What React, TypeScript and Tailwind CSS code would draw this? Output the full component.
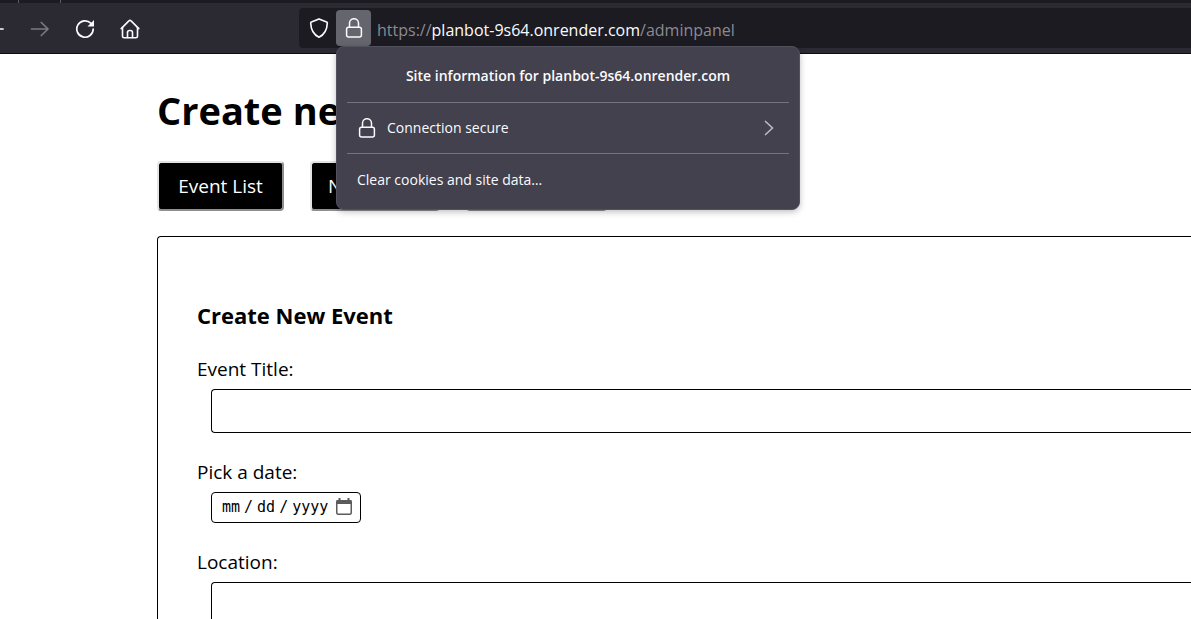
import React from "react";

const pageFont = "font-['Open_Sans','Noto_Sans',sans-serif]";

function Arrow({ flip }: { flip?: boolean }) {
  return (
    <svg viewBox="0 0 20 20" className="h-5 w-5" fill="none" stroke="currentColor" strokeWidth="1.7" strokeLinecap="round" strokeLinejoin="round" aria-hidden="true">
      {flip ? <path d="M18 10H2M9 3L2 10l7 7" /> : <path d="M1.500 10h16.500M11.300 3.500L18 10l-6.700 6.500" />}
    </svg>
  );
}

function ReloadIcon() {
  return (
    <svg viewBox="0 0 20 20" className="h-5 w-5" fill="none" stroke="currentColor" strokeWidth="1.7" strokeLinecap="round" aria-hidden="true">
      <path d="M15.800 4.200A8.200 8.200 0 1 0 18.200 10" />
      <path d="M19 1v6.500h-6.500z" fill="currentColor" stroke="none" />
    </svg>
  );
}

function HomeIcon() {
  return (
    <svg viewBox="0 0 20 20" className="h-5 w-5" fill="none" stroke="currentColor" strokeWidth="1.6" strokeLinecap="round" strokeLinejoin="round" aria-hidden="true">
      <path d="M1.200 9.600l7.700-7.700a1.500 1.500 0 0 1 2.200 0l7.700 7.700" />
      <path d="M2.500 8.500v8.700a1.600 1.600 0 0 0 1.600 1.600h11.800a1.600 1.600 0 0 0 1.600-1.600V8.500" />
      <path d="M7.500 18.500v-5a2 2 0 0 1 2-2h1a2 2 0 0 1 2 2v5" />
    </svg>
  );
}

function ShieldIcon() {
  return (
    <svg viewBox="0 0 20 20" className="h-5 w-5" fill="none" stroke="currentColor" strokeWidth="1.6" strokeLinejoin="round" aria-hidden="true">
      <path d="M10 .9l7.600 3.200a1 1 0 0 1 .7 1C18.100 11 16 16.300 10 19.200 4 16.300 1.900 11 1.700 5.100a1 1 0 0 1 .7-1z" />
    </svg>
  );
}

function LockIcon() {
  return (
    <svg viewBox="0 0 20 20" className="h-5 w-5" fill="none" stroke="currentColor" strokeWidth="1.5" aria-hidden="true">
      <rect x="2.600" y="9.200" width="14.800" height="9.800" rx="2" />
      <path d="M5.500 9V5.200a4.500 4.500 0 0 1 9 0V9" />
    </svg>
  );
}

function CalendarIcon() {
  return (
    <svg viewBox="0 0 16 17" className="h-[17px] w-4" fill="none" aria-hidden="true">
      <rect x=".75" y="2.750" width="14.500" height="13.500" rx="1.500" stroke="#5b5b5b" strokeWidth="1.500" />
      <path d="M.5 2h15v4H.5zM2.500 0h2v3h-2zM11.500 0h2v3h-2z" fill="#5b5b5b" />
    </svg>
  );
}

function SitePanel() {
  return (
    <section
      aria-label="Site information"
      className="absolute left-0 top-full z-10 flex h-[164px] w-[464px] flex-col rounded-lg border border-[#52525e] bg-[#42414d] px-2.5 text-sm text-[#fbfbfe] shadow-[0_2px_6px_rgba(0,0,0,0.25)]"
    >
      <h2 className="flex h-[55px] items-center justify-center pt-0.5 font-semibold">
        Site information for planbot-9s64.onrender.com
      </h2>
      <button type="button" className="flex h-[52px] items-center gap-2.5 border-y border-[#74737e] px-2.5">
        <LockIcon />
        <span>Connection secure</span>
        <svg viewBox="0 0 10 16" className="ml-auto mr-[5px] h-4 w-2.5" fill="none" stroke="#bfbfc9" strokeWidth="1.500" aria-hidden="true">
          <path d="M1 1l7.500 7L1 15" />
        </svg>
      </button>
      <button type="button" className="flex h-[52px] items-center px-2.5 text-left">
        Clear cookies and site data…
      </button>
    </section>
  );
}

function BrowserBar() {
  return (
    <header className="shrink-0 border-b border-[#0c0c0d] bg-[#2b2a33] text-[#fbfbfe]">
      <div className="flex h-[3px] bg-[#1c1b22]">
        <span className="ml-[18px] w-px bg-[#5b5b66]" />
        <span className="ml-[41px] w-px bg-[#5b5b66]" />
      </div>
      <div className="flex h-[50px] items-center">
        <nav aria-label="Browser" className="-ml-[15px] flex w-[314px] shrink-0 items-center gap-[25px] pt-px">
          <button type="button" aria-label="Back"><Arrow flip /></button>
          <button type="button" aria-label="Forward" disabled className="text-[#7b7a82]"><Arrow /></button>
          <button type="button" aria-label="Reload"><ReloadIcon /></button>
          <button type="button" aria-label="Home"><HomeIcon /></button>
        </nav>
        <div className="flex h-10 min-w-0 flex-1 items-center rounded-l bg-[#1c1b22]">
          <button type="button" aria-label="Tracking protection" className="ml-2.5 w-5 shrink-0"><ShieldIcon /></button>
          <div className="relative ml-[7px] shrink-0">
            <button type="button" aria-label="View site information" className="flex h-9 w-[35px] items-center justify-center rounded bg-[#65656d]">
              <LockIcon />
            </button>
            <SitePanel />
          </div>
          <a href="#adminpanel" className="ml-1.5 pt-1 whitespace-nowrap text-base text-[#8b8a91]">
            https://<span className="text-[#fbfbfe]">planbot-9s64.onrender.com</span>/adminpanel
          </a>
        </div>
      </div>
    </header>
  );
}

const tab =
  "h-[50px] rounded border-2 border-t-[#e3e3e3] border-l-[#e3e3e3] border-r-[#8f8f8f] border-b-[#8f8f8f] bg-black px-4 text-[19px] whitespace-nowrap text-white";

const label = "mb-[5px] block text-[19px] leading-[30px]";

const field = "ml-3.5 block h-11 w-full rounded-l border border-r-0 border-black bg-white px-2.5 text-base";

export default function App() {
  return (
    <div className={`flex h-screen flex-col overflow-hidden bg-white text-black ${pageFont}`}>
      <BrowserBar />
      <main className="min-h-0 flex-1 pl-[157px] pt-8">
        <h1 className="text-[38px] font-bold leading-[48px] whitespace-nowrap">Create new</h1>
        <div className="mt-[27px] flex gap-[26px]">
          <button type="button" className={`${tab} w-[127px]`}>Event List</button>
          <button type="button" className={`${tab} w-[130px]`}>New Event</button>
          <button type="button" aria-label="Users" className={`${tab} w-[141px]`} />
        </div>
        <form className="mt-[25px] rounded-l border border-r-0 border-black pl-[39px] pt-16">
          <h3 className="text-[22px] font-bold leading-7">Create New Event</h3>
          <label htmlFor="title" className={`${label} mt-[25px]`}>Event Title:</label>
          <input id="title" type="text" className={field} />
          <label htmlFor="date" className={`${label} mt-6`}>Pick a date:</label>
          <div className="relative ml-3.5 w-[150px]">
            <input
              id="date"
              type="date"
              className="block h-[31px] w-full rounded border border-black bg-white pl-[9px] pr-2 font-['DejaVu_Sans_Mono',monospace] text-[15px] [&::-webkit-datetime-edit-text]:px-[3px] [&::-webkit-calendar-picker-indicator]:ml-0 [&::-webkit-calendar-picker-indicator]:w-4 [&::-webkit-calendar-picker-indicator]:p-0 [&::-webkit-calendar-picker-indicator]:opacity-0"
            />
            <span className="pointer-events-none absolute right-[9px] top-1.5"><CalendarIcon /></span>
          </div>
          <label htmlFor="location" className={`${label} mt-6`}>Location:</label>
          <input id="location" type="text" className={field} />
        </form>
      </main>
    </div>
  );
}
